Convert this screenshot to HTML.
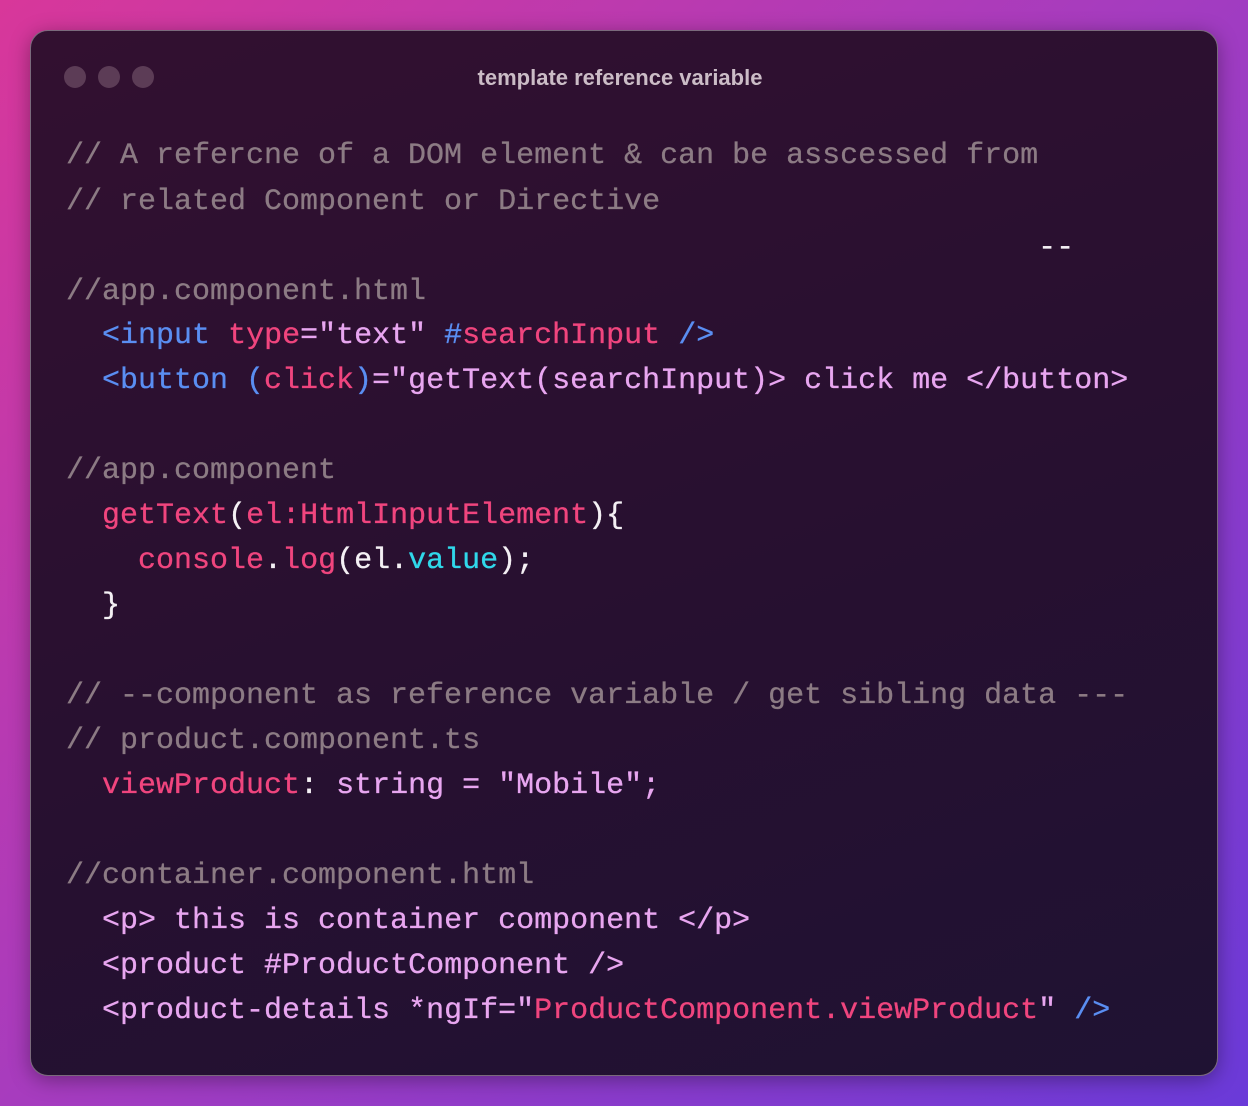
<!DOCTYPE html>
<html><head><meta charset="utf-8"><style>
html,body{margin:0;padding:0}
body{width:1248px;height:1106px;background:linear-gradient(135deg,#d8379a 0%,#a43cc0 50%,#6a3ad8 100%);position:relative;overflow:hidden;font-family:"Liberation Sans",sans-serif}
.win{position:absolute;left:30px;top:30px;width:1186px;height:1044px;border-radius:18px;background:linear-gradient(160deg,#321030 0%,#271030 55%,#1f1233 100%);border:1px solid #7a6a7c;box-shadow:0 4px 20px rgba(0,0,0,.35)}
.dot{position:absolute;top:35px;width:22px;height:22px;border-radius:50%;background:#5c3c56}
.title{position:absolute;left:0;right:0;top:34px;text-align:center;color:#cbbcc6;font-size:22px;font-weight:bold;padding-right:8px}
.code{position:absolute;left:35px;top:103px;font-family:"Liberation Mono",monospace;font-size:30px;color:#f0ecf0;-webkit-text-stroke:0.3px currentColor}
.code div{height:45px;line-height:45px;white-space:pre}
.c{color:#8c7b84}.t{color:#5a8ef2}.p{color:#f0457e}.s{color:#e8a6f0}.w{color:#f4f0f4}.y{color:#30d8ea}
</style></head><body>
<div class="win">
<div class="dot" style="left:33px"></div><div class="dot" style="left:67px"></div><div class="dot" style="left:101px"></div>
<div class="title">template reference variable</div>
<div class="code">
<div class="c" style="height:46px">// A refercne of a DOM element &amp; can be asscessed from</div>
<div class="c" style="height:46px">// related Component or Directive</div>
<div class="w" style="height:44px">                                                      --</div>
<div class="c" style="height:44px">//app.component.html</div>
<div>  <span class="t">&lt;input</span> <span class="p">type</span><span class="s">="text"</span> <span class="t">#</span><span class="p">searchInput</span> <span class="t">/&gt;</span></div>
<div>  <span class="t">&lt;button (</span><span class="p">click</span><span class="t">)</span><span class="s">="getText(searchInput)&gt; click me &lt;/button&gt;</span></div>
<div> </div>
<div class="c">//app.component</div>
<div>  <span class="p">getText</span><span class="w">(</span><span class="p">el:HtmlInputElement</span><span class="w">){</span></div>
<div>    <span class="p">console</span><span class="w">.</span><span class="p">log</span><span class="w">(el.</span><span class="y">value</span><span class="w">);</span></div>
<div>  <span class="w">}</span></div>
<div> </div>
<div class="c">// --component as reference variable / get sibling data ---</div>
<div class="c">// product.component.ts</div>
<div>  <span class="p">viewProduct</span><span class="w">: </span><span class="s">string = "Mobile";</span></div>
<div> </div>
<div class="c">//container.component.html</div>
<div>  <span class="s">&lt;p&gt; this is container component &lt;/p&gt;</span></div>
<div>  <span class="s">&lt;product #ProductComponent /&gt;</span></div>
<div>  <span class="s">&lt;product-details *ngIf="</span><span class="p">ProductComponent.viewProduct</span><span class="s">"</span> <span class="t">/&gt;</span></div>
</div>
</div>
</body></html>
